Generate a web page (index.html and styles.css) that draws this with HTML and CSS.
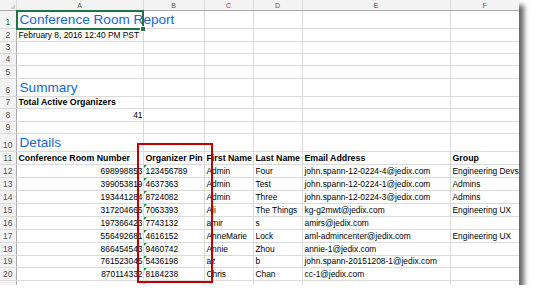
FILE: index.html
```html
<!DOCTYPE html>
<html lang="en">

<head>
    <meta charset="UTF-8">
    <title>Conference Room Report</title>
    <link rel="stylesheet" href="styles.css">
</head>

<body>
    <div class="sheet-wrap">
        <table class="sheet">
            <colgroup>
                <col class="c-rn">
                <col class="c-a">
                <col class="c-b">
                <col class="c-c">
                <col class="c-d">
                <col class="c-e">
                <col class="c-f">
            </colgroup>
            <tr class="col-head">
                <th class="corner"></th>
                <th>A</th><th>B</th><th>C</th><th>D</th><th>E</th><th>F</th>
            </tr>
            <tr class="h18">
                <th class="rn active">1</th>
                <td colspan="2" class="title">Conference Room Report</td>
                <td></td><td></td><td></td><td></td>
            </tr>
            <tr class="h13">
                <th class="rn">2</th>
                <td>February 8, 2016 12:40 PM PST</td>
                <td></td><td></td><td></td><td></td><td></td>
            </tr>
            <tr class="h12">
                <th class="rn">3</th>
                <td></td><td></td><td></td><td></td><td></td><td></td>
            </tr>
            <tr class="h11">
                <th class="rn">4</th>
                <td></td><td></td><td></td><td></td><td></td><td></td>
            </tr>
            <tr class="h13">
                <th class="rn">5</th>
                <td></td><td></td><td></td><td></td><td></td><td></td>
            </tr>
            <tr class="h18">
                <th class="rn">6</th>
                <td class="title">Summary</td>
                <td></td><td></td><td></td><td></td><td></td>
            </tr>
            <tr class="h12">
                <th class="rn">7</th>
                <td class="bold">Total Active Organizers</td>
                <td></td><td></td><td></td><td></td><td></td>
            </tr>
            <tr class="h13">
                <th class="rn">8</th>
                <td class="right">41</td>
                <td></td><td></td><td></td><td></td><td></td>
            </tr>
            <tr class="h12">
                <th class="rn">9</th>
                <td></td><td></td><td></td><td></td><td></td><td></td>
            </tr>
            <tr class="h18">
                <th class="rn">10</th>
                <td class="title">Details</td>
                <td></td><td></td><td></td><td></td><td></td>
            </tr>
            <tr class="h13 bold">
                <th class="rn">11</th>
                <td>Conference Room Number</td>
                <td>Organizer Pin</td>
                <td>First Name</td>
                <td>Last Name</td>
                <td>Email Address</td>
                <td>Group</td>
            </tr>
            <tr class="h13">
                <th class="rn">12</th>
                <td class="right">698998853</td><td class="txt">123456789</td><td>Admin</td><td>Four</td>
                <td>john.spann-12-0224-4@jedix.com</td><td>Engineering Devs</td>
            </tr>
            <tr class="h13">
                <th class="rn">13</th>
                <td class="right">399053819</td><td class="txt">4637363</td><td>Admin</td><td>Test</td>
                <td>john.spann-12-0224-1@jedix.com</td><td>Admins</td>
            </tr>
            <tr class="h13">
                <th class="rn">14</th>
                <td class="right">193441284</td><td class="txt">8724082</td><td>Admin</td><td>Three</td>
                <td>john.spann-12-0224-3@jedix.com</td><td>Admins</td>
            </tr>
            <tr class="h13">
                <th class="rn">15</th>
                <td class="right">317204665</td><td class="txt">7063393</td><td>Ali</td><td>The Things</td>
                <td>kg-g2mwt@jedix.com</td><td>Engineering UX</td>
            </tr>
            <tr class="h13">
                <th class="rn">16</th>
                <td class="right">197366423</td><td class="txt">7743132</td><td>amir</td><td>s</td>
                <td>amirs@jedix.com</td><td></td>
            </tr>
            <tr class="h13">
                <th class="rn">17</th>
                <td class="right">556492681</td><td class="txt">4616152</td><td>AnneMarie</td><td>Lock</td>
                <td>aml-admincenter@jedix.com</td><td>Engineering UX</td>
            </tr>
            <tr class="h13">
                <th class="rn">18</th>
                <td class="right">866454543</td><td class="txt">9460742</td><td>Annie</td><td>Zhou</td>
                <td>annie-1@jedix.com</td><td></td>
            </tr>
            <tr class="h12">
                <th class="rn">19</th>
                <td class="right">761523045</td><td class="txt">5436198</td><td>az</td><td>b</td>
                <td>john.spann-20151208-1@jedix.com</td><td></td>
            </tr>
            <tr class="h13">
                <th class="rn">20</th>
                <td class="right">870114332</td><td class="txt">8184238</td><td>Chris</td><td>Chan</td>
                <td>cc-1@jedix.com</td><td></td>
            </tr>
            <tr class="h4">
                <th class="rn"></th>
                <td></td><td class="txt"></td><td></td><td></td><td></td><td></td>
            </tr>
        </table>

        <!-- selected cell A1 -->
        <div class="selection"><span class="handle"></span></div>
        <!-- red callout round the pin column -->
        <div class="callout"></div>
    </div>
</body>

</html>
```

FILE: styles.css
```css
body {
    margin: 0;
    background-color: #fff;
    font-family: "Liberation Sans", Arial, sans-serif;
    color: #000;
}

.sheet-wrap {
    position: relative;
    width: 519px;
    box-shadow: 5px 5px 5px rgba(0, 0, 0, 0.6);
}

.sheet {
    table-layout: fixed;
    border-collapse: collapse;
    width: 519px;
    background-color: #fff;
    font-size: 8.4px;
}

.c-rn { width: 16px; }
.c-a { width: 127px; }
.c-b { width: 61px; }
.c-c { width: 49px; }
.c-d { width: 49px; }
.c-e { width: 148px; }
.c-f { width: 69px; }

.sheet td {
    border: 1px solid #dadada;
    padding: 0 2px 0;
    white-space: nowrap;
    overflow: hidden;
    vertical-align: bottom;
    line-height: 11px;
    color: #000;
}

.sheet tr > td:last-child {
    border-right: none;
}

.col-head th {
    height: 10px;
    padding: 0;
    font-size: 7px;
    line-height: 9px;
    font-weight: normal;
    color: #555;
    background-color: #f3f3f3;
    border-right: 1px solid #dadada;
    border-bottom: 1px solid #ababab;
}

.col-head th:last-child {
    border-right: none;
}

.corner {
    position: relative;
}

.corner::after {
    content: "";
    position: absolute;
    right: 1px;
    bottom: 1px;
    border-left: 5px solid transparent;
    border-bottom: 5px solid #d4d4d4;
}

.rn {
    padding: 0;
    font-size: 8.5px;
    font-weight: normal;
    color: #555;
    background-color: #f3f3f3;
    border-right: 1px solid #ababab;
    border-bottom: 1px solid #dadada;
    vertical-align: bottom;
    line-height: 11px;
}

.rn.active {
    color: #217346;
}

.h18 { height: 18px; }
.h13 { height: 13px; }
.h12 { height: 12px; }
.h11 { height: 11px; }
.h4 { height: 4px; }

.h4 td, .h4 th {
    border-bottom: none;
}

.sheet td.title {
    font-size: 13.6px;
    line-height: 17px;
    color: #1767d0;
    padding-left: 3px;
}

.bold {
    font-weight: bold;
    font-size: 8.8px;
}

.right {
    text-align: right;
}

.sheet td.right {
    padding-right: 0;
}

.txt {
    position: relative;
}

.txt::before {
    content: "";
    position: absolute;
    left: 0;
    top: 0;
    border-top: 3px solid #1f8f3a;
    border-right: 3px solid transparent;
}

.selection {
    position: absolute;
    left: 16px;
    top: 10px;
    width: 124px;
    height: 16px;
    border: 2px solid #217346;
}

.handle {
    position: absolute;
    right: -4px;
    bottom: -4px;
    width: 4px;
    height: 4px;
    background-color: #217346;
    border: 1px solid #fff;
}

.callout {
    position: absolute;
    left: 137px;
    top: 143px;
    width: 72px;
    height: 136px;
    border: 2px solid #c00000;
}
```
